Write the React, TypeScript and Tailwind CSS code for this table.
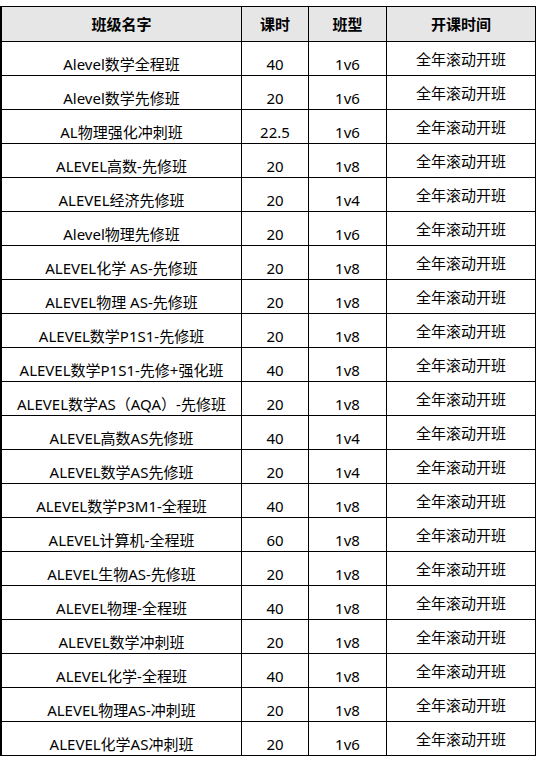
const ROWS: [string, string, string][] = [
  ['Alevel数学全程班', '40', '1v6'],
  ['Alevel数学先修班', '20', '1v6'],
  ['AL物理强化冲刺班', '22.5', '1v6'],
  ['ALEVEL高数-先修班', '20', '1v8'],
  ['ALEVEL经济先修班', '20', '1v4'],
  ['Alevel物理先修班', '20', '1v6'],
  ['ALEVEL化学 AS-先修班', '20', '1v8'],
  ['ALEVEL物理 AS-先修班', '20', '1v8'],
  ['ALEVEL数学P1S1-先修班', '20', '1v8'],
  ['ALEVEL数学P1S1-先修+强化班', '40', '1v8'],
  ['ALEVEL数学AS（AQA）-先修班', '20', '1v8'],
  ['ALEVEL高数AS先修班', '40', '1v4'],
  ['ALEVEL数学AS先修班', '20', '1v4'],
  ['ALEVEL数学P3M1-全程班', '40', '1v8'],
  ['ALEVEL计算机-全程班', '60', '1v8'],
  ['ALEVEL生物AS-先修班', '20', '1v8'],
  ['ALEVEL物理-全程班', '40', '1v8'],
  ['ALEVEL数学冲刺班', '20', '1v8'],
  ['ALEVEL化学-全程班', '40', '1v8'],
  ['ALEVEL物理AS-冲刺班', '20', '1v8'],
  ['ALEVEL化学AS冲刺班', '20', '1v6'],
]

export default function App() {
  return (
    <div
      className="min-h-[758px] bg-white pt-[6px] text-[15px] text-black"
      style={{ fontFamily: '"Noto Sans", "Noto Sans CJK SC", sans-serif' }}
    >
      <div className="w-[536px] border-t border-l-2 border-black">
        {/* Header */}
        <div className="flex h-[35px] border-b border-black bg-[#e6e6e6] font-bold leading-[20px]">
          <div className="flex w-[240px] items-center justify-center border-r border-black">班级名字</div>
          <div className="flex w-[67px] items-center justify-center border-r border-black">课时</div>
          <div className="flex w-[78px] items-center justify-center border-r border-black">班型</div>
          <div className="flex w-[149px] items-center justify-center border-r border-black">开课时间</div>
        </div>

        {ROWS.map(([name, hours, type]) => (
          <div key={name} className="flex h-[34px] border-b border-black leading-[20px]">
            <div className="flex w-[240px] items-end justify-center border-r border-black pb-[1px]">{name}</div>
            <div className="flex w-[67px] items-end justify-center border-r border-black pb-[1px]">{hours}</div>
            <div className="flex w-[78px] items-end justify-center border-r border-black pb-[1px]">{type}</div>
            <div className="flex w-[149px] items-center justify-center border-r border-black">全年滚动开班</div>
          </div>
        ))}
      </div>
    </div>
  )
}
